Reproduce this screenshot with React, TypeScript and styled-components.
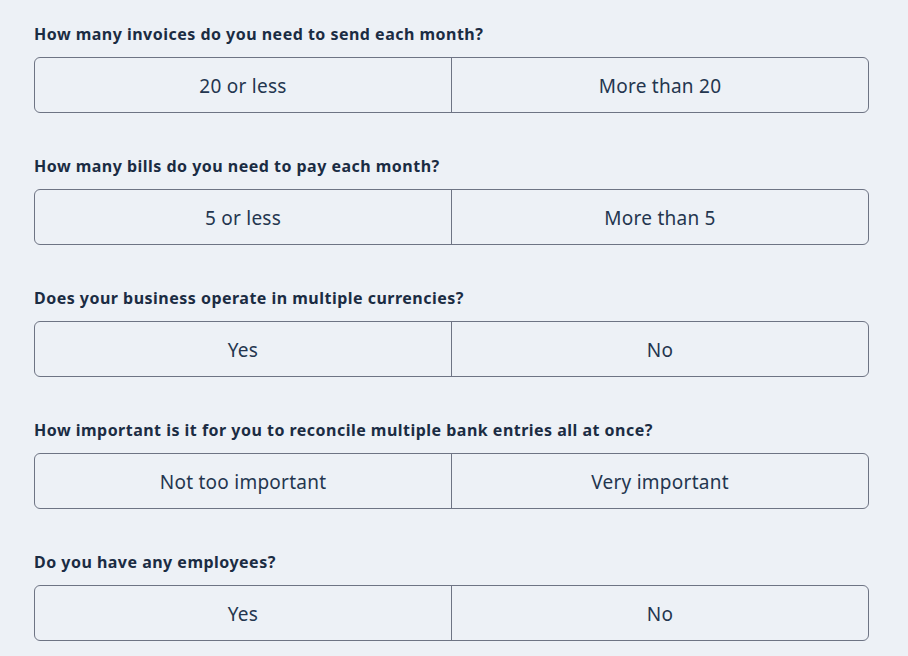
import styled, { createGlobalStyle } from "styled-components";

const GlobalStyle = createGlobalStyle`
  body {
    margin: 0;
    background: #edf1f6;
    font-family: "Noto Sans", "Open Sans", sans-serif;
    color: #1f3149;
  }
`;

const Page = styled.div`
  padding: 24px 39px 0 34px;
  width: 835px;
  display: flex;
  flex-direction: column;
  gap: 43px;
`;

const Question = styled.div`
  display: flex;
  flex-direction: column;
  gap: 13px;
`;

const Label = styled.div`
  font-size: 16px;
  font-weight: 700;
  line-height: 20px;
  color: #1b2c43;
  letter-spacing: 0.48px;
`;

const Options = styled.div`
  display: grid;
  grid-template-columns: 416px 1fr;
  height: 56px;
  box-sizing: border-box;
  border: 1px solid #6e7484;
  border-radius: 6px;
  overflow: hidden;
`;

const Option = styled.button<{ $first?: boolean }>`
  background: transparent;
  border: none;
  border-left: ${(p) => (p.$first ? "none" : "1px solid #6e7484")};
  font-family: inherit;
  font-size: 19px;
  letter-spacing: 0.25px;
  color: #24364f;
  cursor: pointer;
  padding: 2px 0 0;
`;

const questions = [
  { label: "How many invoices do you need to send each month?", options: ["20 or less", "More than 20"] },
  { label: "How many bills do you need to pay each month?", options: ["5 or less", "More than 5"] },
  { label: "Does your business operate in multiple currencies?", options: ["Yes", "No"] },
  {
    label: "How important is it for you to reconcile multiple bank entries all at once?",
    options: ["Not too important", "Very important"],
  },
  { label: "Do you have any employees?", options: ["Yes", "No"] },
];

export default function App() {
  return (
    <>
      <GlobalStyle />
      <Page>
        {questions.map((q) => (
          <Question key={q.label}>
            <Label>{q.label}</Label>
            <Options>
              {q.options.map((o, i) => (
                <Option key={o} $first={i === 0}>
                  {o}
                </Option>
              ))}
            </Options>
          </Question>
        ))}
      </Page>
    </>
  );
}
